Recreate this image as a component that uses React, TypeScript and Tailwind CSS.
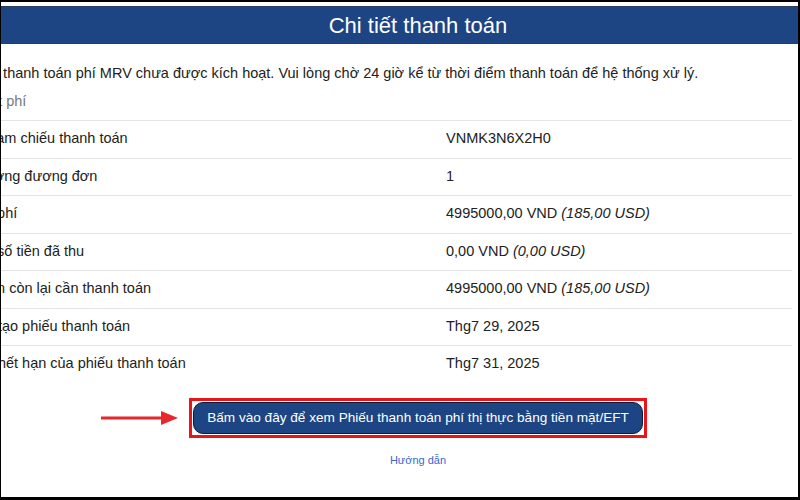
const rows: { label: string; value: string; usd?: string }[] = [
  { label: 'Mã tham chiếu thanh toán', value: 'VNMK3N6X2H0' },
  { label: 'Số lượng đương đơn', value: '1' },
  { label: 'Tổng phí', value: '4995000,00 VND', usd: '(185,00 USD)' },
  { label: 'Tổng số tiền đã thu', value: '0,00 VND', usd: '(0,00 USD)' },
  { label: 'Số tiền còn lại cần thanh toán', value: '4995000,00 VND', usd: '(185,00 USD)' },
  { label: 'Ngày tạo phiếu thanh toán', value: 'Thg7 29, 2025' },
  { label: 'Ngày hết hạn của phiếu thanh toán', value: 'Thg7 31, 2025' },
];

export default function App() {
  return (
    <div
      className="w-[800px] h-[500px] overflow-hidden bg-white border-t-2 border-l border-r-2 border-b-[3px] border-black text-[#222] text-[14.5px]"
      style={{ fontFamily: '"Liberation Sans", Arial, sans-serif' }}
    >
      <div className="-ml-[39px] w-[912px]">
        {/* Tiêu đề */}
        <div className="mt-[4px] h-[38px] bg-[#1d4584] border-y border-[#2b3d5c] flex items-center justify-center text-white text-[22px]">
          Chi tiết thanh toán
        </div>

        <div className="mt-[19px] h-[20px] leading-[20px]">
          Phiếu thanh toán phí MRV chưa được kích hoạt. Vui lòng chờ 24 giờ kể từ thời điểm thanh toán để hệ thống xử lý.
        </div>
        <div className="mt-[8px] h-[20px] leading-[20px] text-[#777] -ml-[5px]">Chi tiết phí</div>

        {/* Bảng phí */}
        <div className="mt-[9px] w-[830px]">
          {rows.map((r) => (
            <div key={r.label} className="h-[37.5px] flex items-center border-t-[1.5px] border-[#e4e4e4]">
              <div className="w-[484px] shrink-0 -ml-[2px] mr-[2px]">{r.label}</div>
              <div>
                {r.value}
                {r.usd && <i> {r.usd}</i>}
              </div>
            </div>
          ))}
        </div>

        {/* Nút xem phiếu */}
        <div className="mt-[15px] flex items-center justify-center">
          <div className="relative">
            <svg
              className="absolute -left-[88px] top-1/2 -translate-y-1/2"
              width="78"
              height="20"
              viewBox="0 0 78 20"
            >
              <line x1="0" y1="10" x2="64" y2="10" stroke="#e8262b" strokeWidth="3" />
              <path d="M60 3 L77 10 L60 17 Z" fill="#e8262b" />
            </svg>
            <div className="border-[3px] border-[#e8151b] p-[1px]">
              <button className="h-[32px] px-[13px] rounded-[10px] bg-[#1d4584] border-[1.5px] border-[#0d1d38] text-white text-[13.6px] leading-none">
                Bấm vào đây để xem Phiếu thanh toán phí thị thực bằng tiền mặt/EFT
              </button>
            </div>
          </div>
        </div>

        <div className="mt-[14px] text-center text-[11px] text-[#3767d0]">Hướng dẫn</div>
      </div>
    </div>
  );
}
